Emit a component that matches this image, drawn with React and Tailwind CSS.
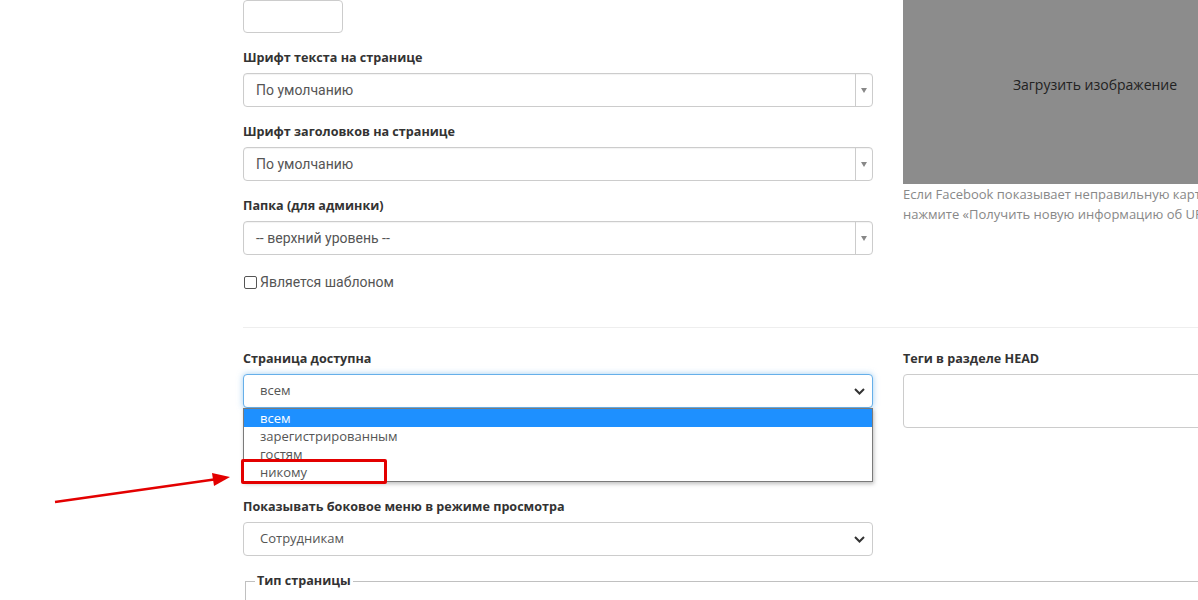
import React from "react";

const labelCls =
  "block pt-[1px] h-[18px] text-[12.6px] leading-[18px] font-bold text-[#333] mb-[7px] [font-family:'Open_Sans',sans-serif]";

function TriSelect({ value }) {
  return (
    <div className="flex h-[34px] w-full items-stretch rounded-[4px] border border-[#ccc] bg-white shadow-[inset_0_1px_1px_rgba(0,0,0,0.05)]">
      <div className="flex flex-1 items-center pl-[12px] text-[14px] text-[#555] [font-family:'Roboto',sans-serif]">
        {value}
      </div>
      <div className="flex w-[17px] items-center justify-center border-l border-[#ccc]">
        <svg width="6" height="5" viewBox="0 0 6 5">
          <path d="M0 0h6L3 5z" fill="#888" />
        </svg>
      </div>
    </div>
  );
}

function Chevron() {
  return (
    <svg width="11" height="7" viewBox="0 0 11 7" className="mr-[7px]">
      <path d="M1 1l4.5 4.5L10 1" stroke="#333" strokeWidth="2" fill="none" />
    </svg>
  );
}

function NativeSelect({ value, focused }) {
  return (
    <div
      className={
        "flex h-[34px] w-full items-center justify-between rounded-[4px] border bg-white pl-[16px] text-[13px] text-[#555] [font-family:'Open_Sans',sans-serif] " +
        (focused
          ? "border-[#66afe9] shadow-[0_0_6px_rgba(102,175,233,0.6)]"
          : "border-[#ccc]")
      }
    >
      <span>{value}</span>
      <Chevron />
    </div>
  );
}

export default function App() {
  return (
    <div className="relative h-[600px] w-[1198px] overflow-hidden bg-white">
      <div className="w-[1300px] pl-[243px]">
        {/* Row 1 */}
        <div className="flex gap-[30px]">
          <div className="w-[630px]">
            <div className="h-[33px] w-[100px] rounded-[4px] border border-[#ccc] bg-white" />
            <div className="mt-[15px]">
              <label className={labelCls}>Шрифт текста на странице</label>
              <TriSelect value="По умолчанию" />
            </div>
            <div className="mt-[15px]">
              <label className={labelCls}>Шрифт заголовков на странице</label>
              <TriSelect value="По умолчанию" />
            </div>
            <div className="mt-[15px]">
              <label className={labelCls}>Папка (для админки)</label>
              <TriSelect value="-- верхний уровень --" />
            </div>
            <div className="mt-[17px] mb-[35px] flex h-[20px] items-center gap-[3px] text-[14px] text-[#555] [font-family:'Roboto',sans-serif]">
              <span className="ml-[1px] inline-block h-[13px] w-[13px] rounded-[2px] border border-[#555] bg-white" />
              <span>Является шаблоном</span>
            </div>
          </div>
          <div className="w-[384px]">
            <div className="flex h-[184px] items-center justify-center bg-[#8c8c8c] pb-[16px] text-[14px] text-[#222] [font-family:'Open_Sans',sans-serif]">
              Загрузить изображение
            </div>
            <div className="text-[13px] leading-[20px] text-[#888] [font-family:'Open_Sans',sans-serif] whitespace-nowrap">
              <div>Если Facebook показывает неправильную картинку, перейдите</div>
              <div>нажмите «Получить новую информацию об URL»</div>
            </div>
          </div>
        </div>

        <div className="border-t border-[#eee]" />

        {/* Row 2 */}
        <div className="flex gap-[30px] pt-[21px]">
          <div className="w-[630px]">
            <div className="relative">
              <label className={labelCls}>Страница доступна</label>
              <div className="relative">
                <NativeSelect value="всем" focused />
                <div className="absolute left-0 top-[34px] z-10 w-[630px] border border-[#7a7a7a] bg-white text-[13px] leading-[18px] text-[#555] shadow-[1px_2px_4px_rgba(0,0,0,0.25)] [font-family:'Open_Sans',sans-serif]">
                  <div className="bg-[#1e90ff] pl-[16px] text-white">всем</div>
                  <div className="pl-[16px]">зарегистрированным</div>
                  <div className="pl-[16px]">гостям</div>
                  <div className="pl-[16px]">никому</div>
                </div>
              </div>
            </div>
            <div className="mt-[89px]">
              <label className={labelCls}>Показывать боковое меню в режиме просмотра</label>
              <NativeSelect value="Сотрудникам" />
            </div>
          </div>
          <div className="w-[384px]">
            <label className={labelCls}>Теги в разделе HEAD</label>
            <div className="h-[54px] w-[400px] rounded-[4px] border border-[#ccc] bg-white" />
          </div>
        </div>

        <fieldset className="ml-[2px] mt-[16px] h-[60px] border-l border-t border-[#c0c0c0]">
          <legend className="ml-[9px] px-[2px] text-[12.6px] leading-[18px] font-bold text-[#333] [font-family:'Open_Sans',sans-serif]">
            Тип страницы
          </legend>
        </fieldset>
      </div>

      {/* Annotations */}
      <div className="absolute left-[241px] top-[459px] z-20 h-[25px] w-[146px] rounded-[2px] border-[3px] border-[#e30000]" />
      <svg
        className="absolute left-0 top-0 z-20"
        width="300"
        height="600"
        viewBox="0 0 300 600"
      >
        <line x1="55" y1="502" x2="214" y2="479.5" stroke="#e30000" strokeWidth="2.5" />
        <path d="M230 477 L212 473 L214 486 Z" fill="#e30000" />
      </svg>
    </div>
  );
}
